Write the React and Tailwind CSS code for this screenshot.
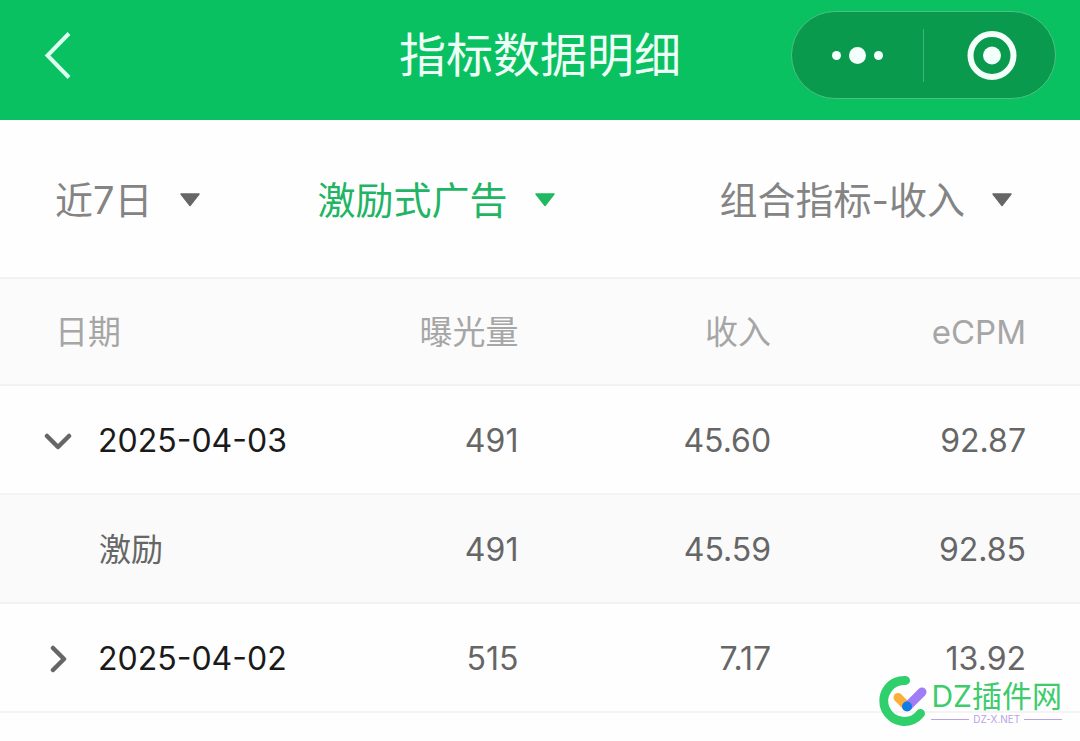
import { Fragment, useState } from 'react'
import clsx from 'clsx'

const filters = [
  { id: 'range', label: '时间范围', value: '近7日' },
  { id: 'adType', label: '广告类型', value: '激励式广告', active: true, className: 'ml-[117px]' },
  { id: 'metric', label: '指标', value: '组合指标-收入', className: 'ml-auto' },
]

const rows = [
  {
    date: '2025-04-03',
    values: ['491', '45.60', '92.87'],
    children: [{ name: '激励', values: ['491', '45.59', '92.85'] }],
  },
  { date: '2025-04-02', values: ['515', '7.17', '13.92'], children: [] },
]

function Header() {
  return (
    <header className="relative flex h-[120px] items-start justify-between bg-[#09c160] pr-6 pl-10 text-white">
      <button type="button" aria-label="返回" className="mt-7 h-14 w-9">
        <svg viewBox="0 0 36 56" className="h-14 w-9" fill="none" stroke="#dcfff0" strokeWidth="4">
          <path d="M29 5.500 7.500 27.500 29 49.500" />
        </svg>
      </button>
      <h1 className="absolute inset-x-0 top-5 mx-auto w-fit text-[47px] leading-[70px] text-[#eefff7]">
        指标数据明细
      </h1>
      <div className="mt-[11px] flex h-[88px] w-[265px] items-center rounded-full border border-[#4fbf85] bg-[#0a9a4d]">
        <button type="button" aria-label="更多" className="flex h-full w-[131px] items-center justify-center">
          <svg viewBox="0 0 52 18" className="h-[18px] w-[52px]" fill="#f2fffa">
            <circle cx="4.500" cy="9.500" r="4.500" />
            <circle cx="25.500" cy="9.500" r="8.500" />
            <circle cx="46.500" cy="9.500" r="4.500" />
          </svg>
        </button>
        <span className="h-[53px] w-px bg-[#3fb478]" />
        <button type="button" aria-label="关闭" className="flex h-full w-[131px] items-center justify-center pl-1">
          <svg viewBox="0 0 50 50" className="size-[50px]">
            <circle cx="25" cy="25.500" r="21.500" fill="none" stroke="#f2fffa" strokeWidth="6" />
            <circle cx="25" cy="25.500" r="9" fill="#f2fffa" />
          </svg>
        </button>
      </div>
    </header>
  )
}

function Filter({ id, label, value, active, className }) {
  return (
    <div className={clsx('flex items-center', active ? 'text-[#1fb565]' : 'text-[#848484]', className)}>
      <select
        id={id}
        aria-label={label}
        defaultValue={value}
        className="field-sizing-content appearance-none bg-transparent pr-12 text-[38px] leading-[56px]"
      >
        <option>{value}</option>
      </select>
      <svg
        viewBox="0 0 22 14"
        className={clsx('pointer-events-none -ml-[22px] h-[14px] w-[22px]', active ? 'text-[#1fb95f]' : 'text-[#666]')}
      >
        <path
          d="M2 1h18L11 12.500Z"
          fill="currentColor"
          stroke="currentColor"
          strokeWidth="1.500"
          strokeLinejoin="round"
        />
      </svg>
    </div>
  )
}

function Values({ values }) {
  return values.map((v, i) => (
    <td key={i} className="pt-[2px] text-right text-[#666] last:pr-[54px]">
      {v}
    </td>
  ))
}

function DataTable() {
  const [open, setOpen] = useState({ '2025-04-03': true })

  return (
    <table className="w-full table-fixed border-collapse text-[32px] leading-12">
      <thead>
        <tr className="h-[107px] border-y-2 border-[#f2f2f2] bg-[#fbfbfb] text-[33px] text-[#a6a6a6]">
          <th className="w-[27%] pl-[55px] text-left font-normal">日期</th>
          <th className="w-[21%] text-right font-normal">曝光量</th>
          <th className="w-[23.4%] text-right font-normal">收入</th>
          <th className="pr-[54px] text-right font-normal">eCPM</th>
        </tr>
      </thead>
      <tbody>
        {rows.map((row) => (
          <Fragment key={row.date}>
            <tr className="h-[109px] border-b-2 border-[#f4f4f4]">
              <td className="pt-[2px] pl-11">
                <button
                  type="button"
                  aria-expanded={!!open[row.date]}
                  onClick={() => setOpen({ ...open, [row.date]: !open[row.date] })}
                  className="flex items-center gap-[26px] whitespace-nowrap text-[#1a1a1a]"
                >
                  <svg
                    viewBox="0 0 28 28"
                    className={clsx('size-7 shrink-0', !open[row.date] && '-rotate-90')}
                    fill="none"
                    stroke="#666"
                    strokeWidth="4.500"
                    strokeLinecap="round"
                    strokeLinejoin="round"
                  >
                    <path d="M3 9 14 20 25 9" />
                  </svg>
                  {row.date}
                </button>
              </td>
              <Values values={row.values} />
            </tr>
            {open[row.date] &&
              row.children.map((c) => (
                <tr key={c.name} className="h-[109px] border-b-2 border-[#f2f2f2] bg-[#fafafa]">
                  <td className="pt-[2px] pl-[99px] text-[#666]">{c.name}</td>
                  <Values values={c.values} />
                </tr>
              ))}
          </Fragment>
        ))}
      </tbody>
    </table>
  )
}

function SiteMark() {
  return (
    <div className="absolute right-[18px] bottom-[14px] flex items-center gap-[3px]">
      <svg viewBox="0 0 50 52" className="h-[52px] w-[50px]" fill="none" strokeLinecap="round">
        <path d="M27.500 5.500A20.500 20.500 0 1 0 42.500 38.500" stroke="#2fd06c" strokeWidth="9" />
        <path d="M20 22.500 29 31.500" stroke="#fcae3b" strokeWidth="9" />
        <path d="M44 17 29.500 31.500" stroke="#a07cf5" strokeWidth="9" />
        <circle cx="29" cy="31.500" r="5" fill="#127be8" />
      </svg>
      <div>
        <div className="text-[30px] leading-9 text-[#3dcb6c]">DZ插件网</div>
        <div className="flex items-center gap-1 text-[10px] leading-[10px] text-[#b9a3e3]">
          <span className="h-px flex-1 bg-[#b9a3e3]" />
          DZ-X.NET
          <span className="h-px flex-1 bg-[#b9a3e3]" />
        </div>
      </div>
    </div>
  )
}

export default function App() {
  return (
    <div className="relative min-h-screen bg-[#fefefe] font-['Inter','Noto_Sans_CJK_SC',sans-serif]">
      <Header />
      <div className="flex h-[157px] items-center pt-[2px] pr-[67px] pl-[55px]">
        {filters.map((f) => (
          <Filter key={f.id} {...f} />
        ))}
      </div>
      <DataTable />
      <SiteMark />
    </div>
  )
}
